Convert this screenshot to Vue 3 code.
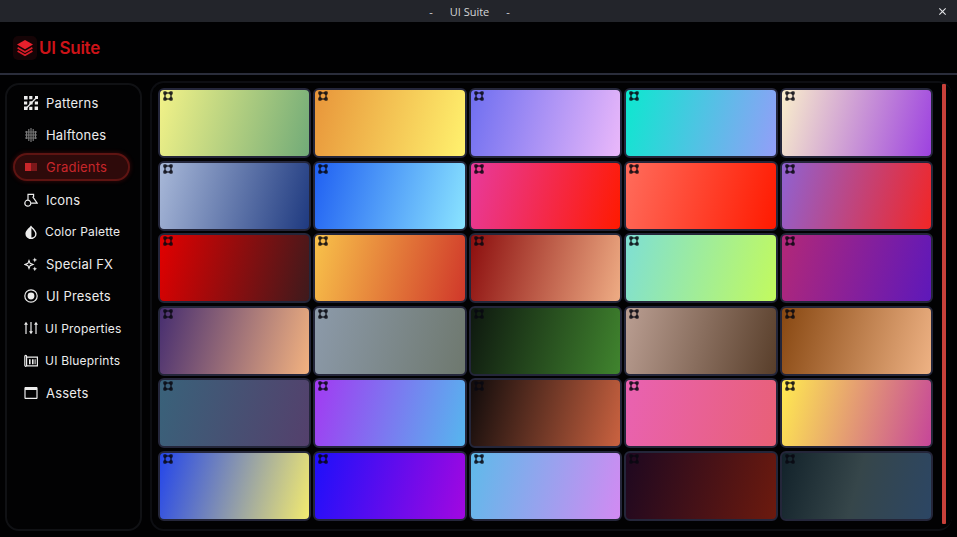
<template>
  <div class="app">
    <div class="titlebar">
      <span class="titlebar__title">-</span>
      <span class="titlebar__title">UI Suite</span>
      <span class="titlebar__title">-</span>
      <svg class="titlebar__close" viewBox="0 0 10 10" aria-hidden="true">
        <path d="M1.5 1.5l7 7M8.5 1.5l-7 7" />
      </svg>
    </div>

    <header class="header">
      <div class="logo">
        <span class="logo__mark">
          <svg viewBox="0 0 18 18" aria-hidden="true">
            <path class="logo__top" d="M9 1l8 4.6-8 4.6-8-4.6z" />
            <path class="logo__line" d="M1.6 8.8L9 13l7.4-4.2M1.6 12L9 16.3l7.4-4.3" />
          </svg>
        </span>
        <span class="logo__text">UI Suite</span>
      </div>
    </header>

    <main class="body">
      <nav class="sidebar">
        <a
          v-for="item in navItems"
          :key="item.label"
          class="nav-item"
          :class="{ 'nav-item--active': item.active, 'nav-item--small': item.small }"
        >
          <svg class="nav-item__icon" viewBox="0 0 14 14" aria-hidden="true">
            <path v-if="item.fill" class="nav-item__fill" :d="item.fill" />
            <path v-if="item.soft" class="nav-item__soft" :d="item.soft" />
            <path v-if="item.stroke" class="nav-item__stroke" :d="item.stroke" />
          </svg>
          <span>{{ item.label }}</span>
        </a>
      </nav>

      <section class="panel">
        <div class="grid">
          <div
            v-for="(g, i) in gradients"
            :key="i"
            class="swatch"
            :style="{ background: `linear-gradient(105deg, ${g.join(', ')})` }"
          >
            <svg class="swatch__icon" viewBox="0 0 10 10" aria-hidden="true">
              <rect x="2" y="2" width="6" height="6" />
              <circle cx="2" cy="2" r="2" />
              <circle cx="8" cy="2" r="2" />
              <circle cx="2" cy="8" r="2" />
              <circle cx="8" cy="8" r="2" />
            </svg>
          </div>
        </div>
        <div class="scrollbar"></div>
      </section>
    </main>
  </div>
</template>

<script setup>
const navItems = [
  {
    label: 'Patterns',
    fill: 'M0 0h3.6v3.6H0zM5.2 0h3.2v3.2H5.2zM11 0h3v3h-3zM0 5.4h3.2v3.2H0zM5.4 5.2h3.2v3.2H5.4zM10.8 5.4h3.2v3.2h-3.2zM0 10.4h3.6V14H0zM5.2 10.8h3.2V14H5.2zM10.6 10.6H14V14h-3.4z',
    stroke: 'M13 1L1.5 13',
  },
  {
    label: 'Halftones',
    soft: 'M2 3h1.2v8H2zM4.2 1h1.2v12H4.2zM6.4 0h1.2v14H6.4zM8.6 1h1.2v12H8.6zM10.8 3h1.2v8h-1.2zM1 3.4h12v1.2H1zM1 6.4h12v1.2H1zM1 9.4h12v1.2H1z',
  },
  {
    label: 'Gradients',
    active: true,
    fill: 'M1 3h6v8H1z',
    soft: 'M7 3h6v8H7z',
  },
  {
    label: 'Icons',
    stroke: 'M4 6.4V1.4h5.6M6 1.4h3.6v2.6M8.6 3.6l4.6 6.6H7.4M6.8 10.2a3 3 0 1 1-6 0a3 3 0 1 1 6 0z',
  },
  {
    label: 'Color Palette',
    small: true,
    fill: 'M7 .4C5.8 2.4 1.4 5.2 1.4 8.8a5.6 5.4 0 0 0 11.2 0C12.6 5.2 8.2 2.4 7 .4zM7.4 3v9.6a3.9 3.8 0 0 0 3.8-3.8C11.2 6.8 8.8 4.6 7.4 3z',
  },
  {
    label: 'Special FX',
    fill: 'M10.8 0.4l.7 1.8 1.8.7-1.8.7-.7 1.8-.7-1.8-1.8-.7 1.8-.7zM10.8 9.4l.7 1.8 1.6.6-1.6.7-.7 1.7-.7-1.7-1.6-.7 1.6-.6z',
    stroke: 'M5 3.6l1.1 2.8 2.8 1.1-2.8 1.1L5 11.4 3.9 8.6 1 7.5l2.9-1.1z',
  },
  {
    label: 'UI Presets',
    fill: 'M7 3.6a3.4 3.4 0 1 1 0 6.8a3.4 3.4 0 1 1 0-6.8z',
    stroke: 'M13.2 7a6.2 6.2 0 1 1-12.4 0a6.2 6.2 0 1 1 12.4 0z',
  },
  {
    label: 'UI Properties',
    small: true,
    fill: 'M2 .8l2 3H0zM7 13.2l-2-3h4zM12 .8l2 3h-4z',
    stroke: 'M2 3v10M7 1v10M12 3v10',
  },
  {
    label: 'UI Blueprints',
    small: true,
    fill: 'M5 5.2h1.6v5H5zM8 5.2h1.6v5H8zM10.6 5.2h1v5h-1z',
    stroke: 'M2.6 3.2h10.8v8.6H2.6M.8 11V2.4C.8 1 2.6 1 2.6 2.4V11C2.6 12.8.8 12.8.8 11z',
  },
  {
    label: 'Assets',
    fill: 'M1 1h12v3H1z',
    stroke: 'M1.6 1.6h10.8a.6.6 0 0 1 .6.6v9.6a.6.6 0 0 1-.6.6H1.6a.6.6 0 0 1-.6-.6V2.2a.6.6 0 0 1 .6-.6z',
  },
]

const gradients = [
  ['#f2f288', '#72ab78'],
  ['#e8953a', '#fff26e'],
  ['#6f6ff0', '#eab8fa'],
  ['#0ce8cf', '#939ef8'],
  ['#f9eecb', '#9d42e0'],
  ['#a8b8d8', '#1f3a80'],
  ['#2060f2', '#8ae4ff'],
  ['#e83a9c', '#ff1a00'],
  ['#ff6c5c', '#ff1a00'],
  ['#8f62d2', '#f22626'],
  ['#e20000', '#3e1a1c'],
  ['#f8c24a', '#d0382a'],
  ['#8c0e0e', '#eeac84'],
  ['#7edfd4', '#c2fa5e'],
  ['#b22878', '#5e18ba'],
  ['#472e70', '#f2b280'],
  ['#8c9aaa', '#6e786e'],
  ['#0e180f', '#40842e'],
  ['#ba9e92', '#583e2a'],
  ['#884812', '#eeb284'],
  ['#39627a', '#54406c'],
  ['#a23af2', '#56b6ee'],
  ['#100b0b', '#ca6240'],
  ['#e962b2', '#e86076'],
  ['#ffea50', '#c64699'],
  ['#2446ea', '#f2ea70'],
  ['#1e10fa', '#a208e0'],
  ['#5ebaea', '#d28af2'],
  ['#1e0820', '#6c1a0e'],
  ['#12222a', '#36464a', '#2c4664'],
]
</script>

<style scoped>
.app {
  display: flex;
  flex-direction: column;
  width: 957px;
  height: 537px;
  overflow: hidden;
  background: #010102;
  color: #ececec;
  font-family: 'Inter', 'Noto Sans', sans-serif;
}

.titlebar {
  position: relative;
  flex: 0 0 22px;
  display: flex;
  align-items: center;
  justify-content: center;
  gap: 17px;
  padding-right: 18px;
  box-sizing: border-box;
  background: #23252b;
}

.titlebar__title {
  font-family: 'Open Sans', 'Noto Sans', sans-serif;
  font-size: 11px;
  color: #d4d5d8;
}

.titlebar__close {
  position: absolute;
  top: 7px;
  right: 10px;
  width: 9px;
  height: 9px;
  fill: none;
  stroke: #e4e5e8;
  stroke-width: 1.2;
}

.header {
  flex: 0 0 53px;
  display: flex;
  align-items: center;
  padding-left: 13px;
  background: #010102;
  border-bottom: 2px solid #2a2d3b;
  box-sizing: border-box;
}

.logo {
  display: flex;
  align-items: center;
  gap: 2px;
}

.logo__mark {
  display: flex;
  align-items: center;
  justify-content: center;
  width: 24px;
  height: 24px;
  border-radius: 5px;
  background: #150406;
}

.logo__mark svg {
  width: 18px;
  height: 18px;
}

.logo__top {
  fill: #e8202c;
}

.logo__line {
  fill: none;
  stroke: #d81c28;
  stroke-width: 1.8;
}

.logo__text {
  font-size: 17px;
  font-weight: 600;
  letter-spacing: -0.3px;
  color: #cc1318;
}

.body {
  flex: 1;
  display: flex;
  gap: 8px;
  min-height: 0;
  padding: 6px 5px 6px 5px;
}

.sidebar {
  flex: 0 0 137px;
  display: flex;
  flex-direction: column;
  gap: 4.2px;
  margin-top: 2px;
  padding: 4px 10px 0 6px;
  box-sizing: border-box;
  border: 2px solid #101114;
  border-radius: 14px;
  background: #020203;
}

.nav-item {
  display: flex;
  align-items: center;
  gap: 8px;
  height: 28px;
  flex: none;
  padding-left: 11px;
  box-sizing: border-box;
  border-radius: 14px;
  font-size: 13px;
  letter-spacing: 0.2px;
  color: #ececec;
}

.nav-item--small {
  gap: 7px;
  font-size: 12px;
}

.nav-item--active {
  color: #c8262a;
  background: #2e0a0a;
  border: 2px solid #5e1412;
  padding-left: 9px;
  box-shadow: 0 0 5px rgba(200, 30, 30, 0.3);
}

.nav-item__icon {
  flex: none;
  width: 14px;
  height: 14px;
}

.nav-item__fill {
  fill: currentColor;
  fill-rule: evenodd;
}

.nav-item__soft {
  fill: currentColor;
  opacity: 0.5;
}

.nav-item__stroke {
  fill: none;
  stroke: currentColor;
  stroke-width: 1.2;
}

.panel {
  position: relative;
  flex: 1;
  display: flex;
  gap: 9px;
  padding: 5px 0 8px 6px;
  box-sizing: border-box;
  border: 2px solid #0d0e12;
  border-right: none;
  border-radius: 14px;
  background: #020203;
}

.grid {
  flex: 0 0 775px;
  display: grid;
  grid-template-columns: repeat(5, 1fr);
  grid-template-rows: repeat(6, 1fr);
  gap: 2.4px;
}

.swatch {
  position: relative;
  box-sizing: border-box;
  border-radius: 6px;
  border: 2px solid #24263a;
}

.swatch__icon {
  position: absolute;
  top: 1px;
  left: 3px;
  width: 10px;
  height: 10px;
  fill: none;
  stroke: rgba(8, 8, 16, 0.72);
  stroke-width: 1.6;
}

.swatch__icon circle {
  fill: rgba(8, 8, 16, 0.72);
  stroke: none;
}

.scrollbar {
  flex: 0 0 4px;
  margin-top: -4px;
  margin-bottom: -3px;
  background: #c8403a;
  border-radius: 1px;
}
</style>

<style>
html,
body {
  background: #010102;
}
</style>
